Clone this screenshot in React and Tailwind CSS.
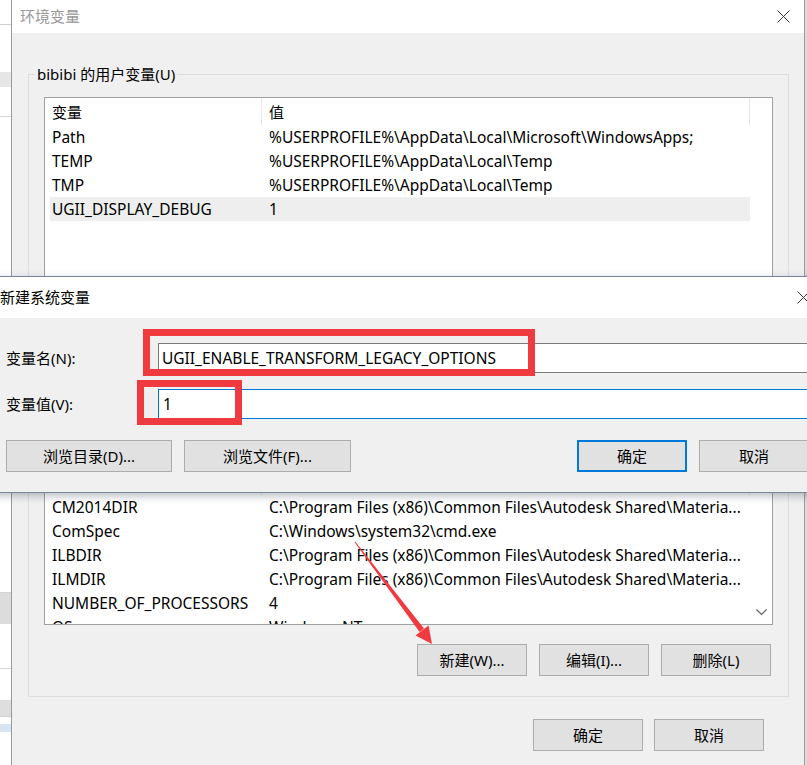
import React from 'react';

const userVars = [
  { name: 'Path', value: '%USERPROFILE%\\AppData\\Local\\Microsoft\\WindowsApps;' },
  { name: 'TEMP', value: '%USERPROFILE%\\AppData\\Local\\Temp' },
  { name: 'TMP', value: '%USERPROFILE%\\AppData\\Local\\Temp' },
  { name: 'UGII_DISPLAY_DEBUG', value: '1', selected: true },
];

const systemVars = [
  { name: 'CM2014DIR', value: 'C:\\Program Files (x86)\\Common Files\\Autodesk Shared\\Materia...' },
  { name: 'ComSpec', value: 'C:\\Windows\\system32\\cmd.exe' },
  { name: 'ILBDIR', value: 'C:\\Program Files (x86)\\Common Files\\Autodesk Shared\\Materia...' },
  { name: 'ILMDIR', value: 'C:\\Program Files (x86)\\Common Files\\Autodesk Shared\\Materia...' },
  { name: 'NUMBER_OF_PROCESSORS', value: '4' },
  { name: 'OS', value: 'Windows_NT' },
];

const CloseIcon = () => (
  <svg width="13" height="13" viewBox="0 0 13 13">
    <path d="M0.5 0.5 L12.5 12.5 M12.5 0.5 L0.5 12.5" stroke="#333" strokeWidth="1" fill="none" />
  </svg>
);

const Button = ({ children, primary, className = '' }) => (
  <div
    className={
      'h-[32px] flex items-center justify-center bg-[#e1e1e1] text-[15px] text-black ' +
      (primary ? 'border-2 border-[#0078d7] ' : 'border border-[#adadad] ') +
      className
    }
  >
    {children}
  </div>
);

// list view with header row, rows and an empty scrollbar column
const VarList = ({ rows, headerClass, heightClass, showArrow }) => (
  <div className={'mx-[15px] border border-[#a0a0a0] bg-white flex overflow-hidden ' + heightClass}>
    <div className="w-[705px] flex flex-col shrink-0">
      <div className={'flex shrink-0 text-[15px] leading-[28px] ' + headerClass}>
        <div className="w-[217px] pl-[7px] border-r border-[#e5e5e5]">变量</div>
        <div className="flex-1 pl-[7px] border-r border-[#e5e5e5]">值</div>
      </div>
      {rows.map((row) => (
        <div
          key={row.name}
          className={
            'ml-[5px] w-[700px] h-[24px] shrink-0 flex text-[15.5px] leading-[24px] whitespace-nowrap ' +
            (row.selected ? 'bg-[#eeeeee]' : '')
          }
        >
          <div className="w-[212px] pl-[2px] overflow-hidden">{row.name}</div>
          <div className="flex-1 pl-[7px] overflow-hidden">{row.value}</div>
        </div>
      ))}
    </div>
    <div className="flex-1 flex flex-col justify-end items-center pb-[8px]">
      {showArrow && (
        <svg width="11" height="7" viewBox="0 0 11 7">
          <polyline points="0.5,0.5 5.5,5.5 10.5,0.5" stroke="#606060" strokeWidth="1.2" fill="none" />
        </svg>
      )}
    </div>
  </div>
);

const App = () => {
  return (
    <div className="relative w-[807px] h-[765px] overflow-hidden bg-[#dcdcdc] text-black font-['Noto_Sans','Noto_Sans_CJK_SC',sans-serif]">
      {/* window behind, left strip */}
      <div className="absolute left-0 top-0 w-[11px] h-full bg-white flex flex-col">
        <div className="h-[25px] border-b border-[#cfcfcf]" />
        <div className="h-[47px]" />
        <div className="h-[15px] bg-[#e6e6e6]" />
        <div className="h-[30px] border-b border-[#d5d5d5]" />
        <div className="h-[476px] border-b border-[#d5d5d5]" />
        <div className="h-[31px] bg-[#dcdcdc]" />
        <div className="h-[45px] border-b border-[#d5d5d5]" />
        <div className="h-[31px]" />
        <div className="h-[17px] bg-[#dedede] border-b border-[#cfcfcf]" />
        <div className="h-[7px]" />
        <div className="h-[8px] bg-[#d6e6f4]" />
      </div>

      {/* 环境变量 dialog */}
      <div className="absolute left-[11px] top-0 w-[794px] h-[780px] border-l border-r border-[#9a9a9a] flex flex-col">
        <div className="h-[33px] bg-white flex items-center justify-between pl-[8px] pr-[14px] shrink-0">
          <span className="text-[15px] text-[#999]">环境变量</span>
          <CloseIcon />
        </div>
        <div className="flex-1 bg-[#f0f0f0] flex flex-col pl-[16px] pr-[15px] pt-[31px]">
          <fieldset className="border border-[#dcdcdc] pb-[20px]">
            <legend className="ml-[6px] px-[2px] text-[15px] leading-[20px]">bibibi 的用户变量(U)</legend>
            <div className="mt-[13px]">
              <VarList rows={userVars} headerClass="h-[27px]" heightClass="h-[260px]" />
            </div>
            <div className="mt-[14px] mr-[17px] flex justify-end gap-[12px]">
              <Button className="w-[110px]">新建(N)...</Button>
              <Button className="w-[110px]">编辑(E)...</Button>
              <Button className="w-[110px]">删除(D)</Button>
            </div>
          </fieldset>

          <fieldset className="mt-[9px] border border-[#dcdcdc] pb-[20px]">
            <legend className="ml-[6px] px-[2px] text-[15px] leading-[20px]">系统变量(S)</legend>
            <div className="mt-[13px]">
              <VarList rows={systemVars} headerClass="h-[28px]" heightClass="h-[159px]" showArrow />
            </div>
            <div className="mt-[19px] mr-[17px] flex justify-end gap-[12px]">
              <Button className="w-[110px]">新建(W)...</Button>
              <Button className="w-[110px]">编辑(I)...</Button>
              <Button className="w-[110px]">删除(L)</Button>
            </div>
          </fieldset>

          <div className="mt-[22px] pr-[25px] flex justify-end gap-[11px]">
            <Button className="w-[110px]">确定</Button>
            <Button className="w-[110px]">取消</Button>
          </div>
        </div>
      </div>

      {/* 新建系统变量 dialog */}
      <div className="absolute left-[-10px] top-[276px] w-[836px] h-[217px] border border-[#7a8599] bg-[#f0f0f0] flex flex-col shadow-[0_3px_8px_rgba(60,70,90,0.35)]">
        <div className="h-[41px] bg-white flex items-center justify-between pl-[9px] pr-[15px] shrink-0">
          <span className="text-[15px]">新建系统变量</span>
          <CloseIcon />
        </div>
        <div className="flex-1 flex flex-col pl-[15px] pr-[16px] pt-[25px]">
          <div className="flex items-center">
            <div className="w-[152px] text-[15px]">变量名(N):</div>
            <div className="flex-1 h-[30px] bg-white border border-[#7a7a7a] pl-[3px] text-[15.5px] leading-[28px] whitespace-nowrap">
              UGII_ENABLE_TRANSFORM_LEGACY_OPTIONS
            </div>
          </div>
          <div className="mt-[16px] flex items-center">
            <div className="w-[152px] text-[15px]">变量值(V):</div>
            <div className="flex-1 h-[30px] bg-white border border-[#0078d7] pl-[4px] text-[15.5px] leading-[28px]">1</div>
          </div>
          <div className="mt-[21px] flex gap-[12px]">
            <Button className="w-[166px]">浏览目录(D)...</Button>
            <Button className="w-[167px]">浏览文件(F)...</Button>
            <div className="ml-auto flex gap-[12px]">
              <Button primary className="w-[110px]">确定</Button>
              <Button className="w-[110px]">取消</Button>
            </div>
          </div>
        </div>
      </div>

      {/* red annotation boxes */}
      <div className="absolute left-[143px] top-[329px] w-[392px] h-[47px] border-[7px] border-[#ef3b3f]" />
      <div className="absolute left-[137px] top-[380px] w-[105px] h-[45px] border-[7px] border-[#ef3b3f]" />

      {/* red arrow */}
      <svg className="absolute left-0 top-0" width="807" height="765" viewBox="0 0 807 765">
        <polygon points="354.6,542.3 355.4,541.7 424,628.5 419.6,631.9" fill="#ef3b3f" />
        <polygon points="432,644 428.5,625.5 415.5,635.5" fill="#ef3b3f" />
      </svg>
    </div>
  );
};

export default App;
